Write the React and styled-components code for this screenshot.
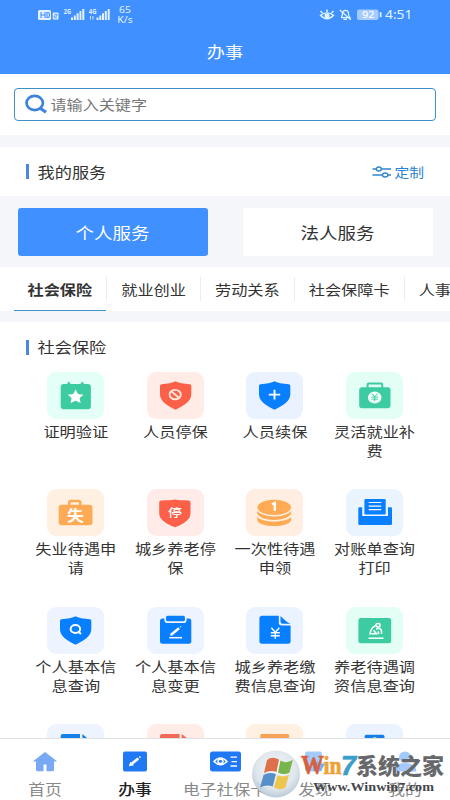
import React from 'react';
import styled, { createGlobalStyle } from 'styled-components';

const GlobalStyle = createGlobalStyle`
  * {
    box-sizing: border-box;
  }

  body {
    margin: 0;
    font-family: "Noto Sans CJK SC", "Noto Sans", sans-serif;
    color: #333;
  }
`

const Screen = styled.div`
  position: relative;
  display: flex;
  flex-direction: column;
  width: 450px;
  height: 800px;
  overflow: hidden;
  background-color: white;
`

/* the type is wider than it is tall all over the app */
const Text = styled.span`
  display: block;
  flex: none;
  font-size: ${props => props.$size || 16.2}px;
  font-weight: ${props => props.$weight || 400};
  line-height: 24px;
  color: ${props => props.$color || '#333'};
  white-space: nowrap;
  transform: scaleY(0.85);
`

const Header = styled.div`
  flex: none;
  height: 73.5px;
  background-color: #4090ff;
`

const StatusBar = styled.div`
  height: 30px;
  display: flex;
  justify-content: space-between;
  padding: 0 39px 0 37px;
`

const StatusGroup = styled.div`
  display: flex;
  align-items: center;
`

const Speed = styled.div`
  width: 28px;
  padding-top: 0;
  font-family: "Noto Sans", sans-serif;
  font-size: 9.5px;
  line-height: 10px;
  color: #e3f1ff;
  text-align: center;
  transform: scaleX(1.1);
`

const Time = styled.div`
  margin-left: 3px;
  width: 26px;
  font-family: "Noto Sans", sans-serif;
  font-size: 13px;
  line-height: 28px;
  padding-bottom: 2px;
  color: #e6f6ff;
  white-space: nowrap;
  transform: scaleX(1.06);
  transform-origin: left;
`

const TitleBar = styled.div`
  height: 42px;
  display: flex;
  justify-content: center;
  align-items: center;
`

const SearchArea = styled.div`
  flex: none;
  height: 61.5px;
  padding: 14.5px 14px 0;
`

const SearchBox = styled.div`
  height: 33px;
  display: flex;
  align-items: center;
  gap: 3px;
  padding: 0 0 1px 9.5px;
  border: 1.5px solid #3f8fc9;
  border-radius: 4px;
`

const Gap = styled.div`
  flex: none;
  height: ${props => props.$height}px;
  background-color: #f4f6f9;
`

const SectionTitle = styled.div`
  flex: none;
  height: ${props => props.$height}px;
  display: flex;
  align-items: center;
  padding: 0 26px 0 26px;
`

const Bar = styled.div`
  width: 3px;
  height: 15px;
  margin-right: 8.5px;
  background-color: #4a88e2;
`

const Customize = styled.div`
  display: flex;
  align-items: center;
  gap: 2px;
  margin-left: auto;
`

const ServiceSwitch = styled.div`
  flex: none;
  height: 71px;
  display: flex;
  gap: 35px;
  padding: 11.5px 17.5px;
  background-color: #f4f6f9;
`

const ServiceButton = styled.div`
  flex: 1;
  display: flex;
  align-items: center;
  justify-content: center;
  border-radius: 3px;
  background-color: ${props => (props.$active ? '#4090ff' : 'white')};
`

const Tabs = styled.div`
  flex: none;
  height: 44px;
  display: flex;
  padding-left: 13.5px;
  overflow: hidden;
`

const Tab = styled.div`
  flex: none;
  display: flex;
  align-items: center;
  padding: 0 14px;
  border-bottom: 1.5px solid ${props => (props.$active ? '#3e94c4' : 'transparent')};
`

const Divider = styled.div`
  flex: none;
  width: 1px;
  height: 24px;
  margin-top: 10px;
  background-color: #e9edf0;
`

const Services = styled.div`
  flex: 1;
  min-height: 0;
  display: grid;
  grid-template-columns: repeat(4, 99.6px);
  grid-auto-rows: 117.3px;
  padding-left: 26px;
  overflow: hidden;
`

const Service = styled.div`
  display: flex;
  flex-direction: column;
  align-items: center;
`

const Tile = styled.div`
  flex: none;
  width: 57px;
  height: 47px;
  border-radius: 9px;
  background-color: ${props => props.$background};

  svg {
    display: block;
  }
`

const Label = styled.div`
  width: 86px;
  margin-top: 3px;
  text-align: center;
  font-size: 16.2px;
  line-height: 22.4px;
  white-space: pre-line;
  transform: scaleY(0.85);
  transform-origin: top;
`

const NavBar = styled.div`
  flex: none;
  height: 62px;
  display: grid;
  grid-template-columns: repeat(5, 90px);
  border-top: 1.5px solid #dfe1e3;
  background-color: white;
`

const NavItem = styled.div`
  display: flex;
  flex-direction: column;
  align-items: center;
  padding-top: 11.5px;

  svg {
    flex: none;
    margin-bottom: 5px;
  }
`

const Watermark = styled.svg`
  position: absolute;
  left: 250px;
  top: 746px;
`

const GREEN = '#3dcba2'
const RED = '#fc6049'
const BLUE = '#087fff'
const ORANGE = '#ffaa55'

const Shield = ({ color }) => (
  <path fill={color} d="M28.5 9.3C26 10.8 20 12 14.5 12.2Q13 12.3 13 13.7V22C13 29 19 33 28.5 37.8C38 33 44.3 29 44.3 22V13.7Q44.3 12.3 42.8 12.2C37 12 31 10.8 28.5 9.3Z" />
)

const Yen = ({ x, y, size = 1, color = 'white' }) => (
  <path
    transform={`translate(${x} ${y}) scale(${size})`}
    d="M-4 -5.5L0 -1L4 -5.5M0 -1V5.5M-4.5 -0.5H4.5M-4.5 2.5H4.5"
    stroke={color}
    strokeWidth="1.4"
    fill="none"
  />
)

const icons = {
  star: (
    <>
      <rect x="13.7" y="12" width="30.2" height="25.3" rx="3" fill={GREEN} />
      <path d="M21.8 12V11.5M35.2 12V11.5" stroke={GREEN} strokeWidth="3" strokeLinecap="round" />
      <path fill="white" d="M28.6 17.5L31 22L36.5 22.7L32.6 26.1L33.6 31L28.6 28.7L23.6 31L24.6 26.1L20.7 22.7L26.2 22Z" />
    </>
  ),
  stop: (
    <>
      <Shield color={RED} />
      <ellipse cx="28.2" cy="22.6" rx="5.6" ry="4.7" fill="none" stroke="#ffe8da" strokeWidth="1.9" />
      <path d="M24.6 19.5L31.8 25.7" stroke="#ffe8da" strokeWidth="1.8" />
    </>
  ),
  plus: (
    <>
      <Shield color={BLUE} />
      <path d="M28.5 17.7V27.5M22.8 22.6H34.2" stroke="white" strokeWidth="1.9" />
    </>
  ),
  purse: (
    <>
      <rect x="13.2" y="15.3" width="31.3" height="21" rx="3" fill={GREEN} />
      <rect x="21.6" y="11.4" width="14.6" height="6" rx="1" fill="none" stroke={GREEN} strokeWidth="2" />
      <ellipse cx="28.7" cy="25.4" rx="6.8" ry="6" fill="#effff8" />
      <Yen x={28.7} y={25.4} size={0.7} color={GREEN} />
    </>
  ),
  jobless: (
    <>
      <rect x="11.7" y="15.8" width="33.8" height="20.4" rx="3" fill={ORANGE} />
      <path d="M22.3 17V13.5Q22.3 12 24 12H31.5Q33.3 12 33.3 13.5V17" fill="none" stroke={ORANGE} strokeWidth="2.6" />
      <text transform="translate(28.6 32.2) scale(1 0.9)" textAnchor="middle" fontFamily="'Noto Sans CJK SC', sans-serif" fontWeight="700" fontSize="17" fill="white">失</text>
    </>
  ),
  pause: (
    <>
      <path fill={RED} d="M28 10.5C32 11.3 36 11.4 41.5 11.4Q43.5 11.5 43.5 13.5V24C43.5 31 37 34.5 28 38.3C19 34.5 12.2 31 12.2 24V13.5Q12.2 11.5 14.2 11.4C20 11.4 24 11.3 28 10.5Z" />
      <text transform="translate(28 27.6) scale(1 0.85)" textAnchor="middle" fontFamily="'Noto Sans CJK SC', sans-serif" fontWeight="500" fontSize="14" fill="white">停</text>
    </>
  ),
  coins: (
    <>
      <path fill={ORANGE} d="M11.2 28C17 34 39 34 45.2 28V31C43 39 13 39 11.2 31Z" />
      <path fill={ORANGE} stroke="#fff0e2" strokeWidth="1.4" d="M10.5 21V24.5C13 34 43 34 45.8 24.5V21Z" />
      <ellipse cx="28.2" cy="18.4" rx="17.5" ry="8.4" fill={ORANGE} stroke="#fff0e2" strokeWidth="1.4" />
      <path d="M26 15.5L28.8 14V21.8" fill="none" stroke="white" strokeWidth="2.3" />
    </>
  ),
  printer: (
    <>
      <path fill={BLUE} d="M12.3 19.5Q12.3 18.3 13.6 18.3H16.2V27H42V18.3H44.8Q46 18.3 46 19.5V34.8Q46 36.1 44.6 36.1H13.7Q12.3 36.1 12.3 34.8Z" />
      <rect x="18.4" y="10" width="21.3" height="15.6" rx="1.3" fill={BLUE} />
      <path d="M22.7 13.5H35.2M22.7 17.1H35.2M22.7 20.7H35.2" stroke="white" strokeWidth="1.2" />
    </>
  ),
  query: (
    <>
      <Shield color={BLUE} />
      <ellipse cx="28.4" cy="22" rx="4.8" ry="4" fill="none" stroke="white" strokeWidth="2" />
      <path d="M31 24.5L34 27" stroke="white" strokeWidth="2" />
    </>
  ),
  edit: (
    <>
      <rect x="13" y="11.6" width="31.3" height="25.1" rx="2.5" fill={BLUE} />
      <rect x="18.2" y="7.8" width="20.6" height="7.4" rx="2.5" fill={BLUE} stroke="#edf4ff" strokeWidth="1.7" />
      <path d="M25 27L32 21.2" stroke="white" strokeWidth="2.5" />
      <path d="M23.7 28.3L24.1 26.2L26 27.7ZM32.9 20.4L34.2 19.3" fill="white" stroke="white" strokeWidth="1" />
      <path d="M22.3 30.7H35" stroke="white" strokeWidth="1.5" />
    </>
  ),
  bill: (
    <>
      <path fill={BLUE} d="M16.2 8.8H32.8V15.7Q32.8 18.4 35.8 18.4H44.6V34.2Q44.6 36.7 42 36.7H16.2Q13.4 36.7 13.4 34.2V11.3Q13.4 8.8 16.2 8.8Z" />
      <path fill={BLUE} d="M34.5 9V14.8Q34.5 16.7 36.8 16.7H44.6C41 15.5 37.5 12 34.5 9Z" />
      <Yen x={29.3} y={26.3} />
    </>
  ),
  raise: (
    <>
      <rect x="12.4" y="11" width="32.8" height="25.2" rx="2.5" fill={GREEN} />
      <g fill="none" stroke="white" strokeWidth="1.5">
        <ellipse cx="32" cy="18.3" rx="2.1" ry="1.7" />
        <path d="M29.7 18.7C26 19.5 24.7 23 24 26.7H30.5L27.5 23.3M30 22L33.5 21.3Q36 22.5 35.5 26.8M31.7 24.5L33.2 26.8" />
        <path d="M22.5 31.2H37.5" />
      </g>
    </>
  ),
  docBlue: (
    <>
      <path fill="#147fe8" d="M16 10H33V30H13.7V12Q13.7 10 16 10Z" />
      <path fill="#147fe8" d="M35.4 10L43 16.5H35.4Z" />
    </>
  ),
  docRed: (
    <>
      <path fill="#f06a57" d="M15.3 10H32.5V30H13V12Q13 10 15.3 10Z" />
      <path fill="#f06a57" d="M34.7 10L43 16.5H34.7Z" />
    </>
  ),
  box: <rect x="14.3" y="10" width="28.8" height="25" rx="1.5" fill="#f6a257" />,
  badge: (
    <>
      <rect x="18.7" y="10.7" width="19.7" height="25" rx="1.5" fill="#147fe8" />
      <circle cx="28.7" cy="15.8" r="2.6" fill="white" />
    </>
  ),
}

const services = [
  { icon: 'star', label: '证明验证', background: '#e3fff7' },
  { icon: 'stop', label: '人员停保', background: '#ffece6' },
  { icon: 'plus', label: '人员续保', background: '#eaf2ff' },
  { icon: 'purse', label: '灵活就业补\n费', background: '#e3fff5' },
  { icon: 'jobless', label: '失业待遇申\n请', background: '#fff0e2' },
  { icon: 'pause', label: '城乡养老停\n保', background: '#ffece8' },
  { icon: 'coins', label: '一次性待遇\n申领', background: '#ffeee1' },
  { icon: 'printer', label: '对账单查询\n打印', background: '#eaf4ff' },
  { icon: 'query', label: '个人基本信\n息查询', background: '#edf4ff' },
  { icon: 'edit', label: '个人基本信\n息变更', background: '#edf4ff' },
  { icon: 'bill', label: '城乡养老缴\n费信息查询', background: '#eaf3ff' },
  { icon: 'raise', label: '养老待遇调\n资信息查询', background: '#e3fff5' },
  { icon: 'docBlue', background: '#eef4ff' },
  { icon: 'docRed', background: '#ffece6' },
  { icon: 'box', background: '#fff0e2' },
  { icon: 'badge', background: '#eaf3ff' },
]

const tabs = ['社会保险', '就业创业', '劳动关系', '社会保障卡', '人事']

const SignalIcons = () => (
  <svg width="74" height="30" viewBox="37 0 74 30" fill="#e3f1ff">
    <rect x="38" y="10" width="13" height="10" rx="1.5" />
    <path d="M41 12V18M45 12V18M41 15H45M47 12.5H48Q49.5 12.5 49.5 15T48 17.5H47Z" fill="none" stroke="#4090ff" strokeWidth="1.1" />
    <rect x="52.7" y="12.5" width="5.8" height="7" rx="1" />
    <path d="M54.2 14.2H57V16H54.2V17.8H57" fill="none" stroke="#4090ff" strokeWidth="0.8" />
    <text x="63.8" y="14" fontFamily="'Noto Sans', sans-serif" fontWeight="700" fontSize="6.5" textLength="7.2" lengthAdjust="spacingAndGlyphs">2G</text>
    <text x="88.8" y="14" fontFamily="'Noto Sans', sans-serif" fontWeight="700" fontSize="6.5" textLength="7.7" lengthAdjust="spacingAndGlyphs">4G</text>
    <path d="M71 17.5H73V20H71ZM73.8 15.5H75.8V20H73.8ZM76.6 13.3H78.6V20H76.6ZM79.5 11H81.4V20H79.5ZM82.3 9H84.3V20H82.3Z" />
    <path d="M96.5 17.5H98.5V20H96.5ZM99.3 15.5H101.3V20H99.3ZM102 13.3H104V20H102ZM104.8 11H106.8V20H104.8ZM107.7 9H109.7V20H107.7Z" />
    <path d="M90.5 16V19.5M93 16V19.5" stroke="#cde5ff" strokeWidth="1" />
  </svg>
)

const StateIcons = () => (
  <svg width="64" height="30" viewBox="317 0 64 30" fill="none" stroke="#e0f7ff" strokeWidth="1.4">
    <path d="M319.5 15.3Q326 10.5 332.5 15.3Q326 22.3 319.5 15.3ZM319.5 11L321.5 13M326 9.5V12M332.5 11L330.5 13" />
    <circle cx="326" cy="15.7" r="1.8" fill="#e0f7ff" />
    <path d="M340.3 17.5Q341.5 16 341.5 13Q341.8 10.5 344.3 10.3Q347.5 10.5 347.5 13.5Q347.5 16 349 17.7H340M342.5 19.3H346M338.8 10L349.8 19.7" strokeWidth="1.2" />
    <rect x="356" y="9.5" width="21.5" height="10.5" rx="2" fill="#a6ccff" stroke="none" />
    <rect x="378.7" y="12.2" width="1.8" height="5" fill="#e0f7ff" stroke="none" />
    <text x="361" y="18.3" fontFamily="'Noto Sans', sans-serif" fontWeight="500" fontSize="9.5" fill="white" stroke="none" textLength="12.5" lengthAdjust="spacingAndGlyphs">92</text>
  </svg>
)

const SearchIcon = () => (
  <svg width="23" height="20" viewBox="0 0 23 20" fill="none" stroke="#3d82dc" strokeWidth="2.7">
    <ellipse cx="9.7" cy="9" rx="8.2" ry="7.2" />
    <path d="M14.5 13.8L21 18.3" strokeWidth="3.2" />
  </svg>
)

const SlidersIcon = () => (
  <svg width="20" height="12" viewBox="0 0 20 12" fill="none" stroke="#3185cd" strokeWidth="1.4">
    <path d="M0.5 3H4.5M9 3H19M0.5 9H10.5M16 9H19" />
    <ellipse cx="6.8" cy="3" rx="2.5" ry="2" />
    <ellipse cx="13.2" cy="9" rx="2.7" ry="2" />
  </svg>
)

const HomeIcon = () => (
  <svg width="26" height="21" viewBox="0 0 26 21">
    <path fill="#77a9f4" d="M13 1L25.3 10.5H22V18.7Q22 20.2 20 20.2H14.5V13.5H11.5V20.2H6Q4 20.2 4 18.7V10.5H0.7Z" />
  </svg>
)

const WorkIcon = () => (
  <svg width="24" height="21" viewBox="0 0 24 21">
    <rect y="0.5" width="24" height="20" rx="2" fill="#2178f5" />
    <path d="M8.7 12.8L15.3 7.5" stroke="white" strokeWidth="2.7" />
    <path d="M7 14.3L7.6 12.3L9.4 13.8ZM16.3 6.7L17.5 5.7" fill="white" stroke="white" strokeWidth="1.5" />
  </svg>
)

const CardIcon = () => (
  <svg width="31" height="21" viewBox="0 0 31 21" fill="none" stroke="white" strokeWidth="1.5">
    <rect y="0.5" width="31" height="20" rx="2.5" fill="#2178f5" stroke="none" />
    <path d="M4 10.5Q10.5 3.5 17 10.5Q10.5 17 4 10.5Z" />
    <ellipse cx="10.5" cy="10.4" rx="2.5" ry="2.2" />
    <path d="M20.5 6.2H27M21.5 10.7H27M20.5 15H27" strokeWidth="1.3" />
  </svg>
)

const FindIcon = () => (
  <svg width="24" height="21" viewBox="0 0 24 21">
    <rect x="2" y="0.5" width="17" height="20" rx="2" fill="#a4cbfa" />
    <path d="M11 10L22 13L18 20H10Z" fill="#78b3ee" />
  </svg>
)

const MineIcon = () => (
  <svg width="26" height="21" viewBox="0 0 26 21" fill="#a4c9fa">
    <ellipse cx="13" cy="6" rx="6" ry="5.5" />
    <path d="M1.5 20.5Q2 12 13 12T24.5 20.5Z" />
  </svg>
)

const SiteWatermark = () => (
  <Watermark width="200" height="54" viewBox="250 746 200 54">
    <defs>
      <radialGradient id="orb" cx="50%" cy="40%" r="60%">
        <stop offset="0" stopColor="#f5f8fb" />
        <stop offset="0.7" stopColor="#dce3ea" />
        <stop offset="1" stopColor="#b6c6d6" />
      </radialGradient>
    </defs>
    <ellipse cx="276" cy="774" rx="24" ry="23.5" fill="url(#orb)" opacity="0.93" />
    <path fill="#df704c" d="M267 760Q272 756 279 759.5L276.5 772Q270 769.5 264 773Z" />
    <path fill="#78b64c" d="M280.5 760.5Q286 764 292.8 760L289.5 772.5Q284 775.5 278 772.5Z" />
    <path fill="#568fc8" d="M263.5 775Q269 771.5 276 774L272.7 786.5Q267 784 260 787.5Z" />
    <path fill="#edc64e" d="M277.5 775Q283 778 289 774.8L285.5 787.5Q280 791 274 787.5Z" />
    <g fontFamily="'Liberation Sans', sans-serif" fontWeight="700" strokeWidth="0.7">
      <text x="301" y="774" fontFamily="'Liberation Serif', serif" fontSize="28" fill="#d9603f" stroke="#d9603f" textLength="23" lengthAdjust="spacingAndGlyphs">W</text>
      <text x="323.5" y="774" fontFamily="'Liberation Serif', serif" fontSize="25" fill="#efa234" stroke="#efa234" textLength="18" lengthAdjust="spacingAndGlyphs">in</text>
      <text x="341" y="774.5" fontSize="27" fontStyle="italic" fill="#3b9fca" stroke="#3b9fca" textLength="15" lengthAdjust="spacingAndGlyphs">7</text>
      <text x="356" y="773.5" fontFamily="'Noto Sans CJK SC', sans-serif" fontWeight="900" fontSize="22" fill="#66686b" textLength="88" lengthAdjust="spacingAndGlyphs">系统之家</text>
    </g>
    <text x="313" y="791" fontFamily="'Liberation Serif', serif" fontWeight="700" fontSize="13.5" fill="#44464a" textLength="121" lengthAdjust="spacingAndGlyphs">Www.Winwin7.com</text>
  </Watermark>
)

const navItems = [
  { label: '首页', Icon: HomeIcon },
  { label: '办事', Icon: WorkIcon, active: true },
  { label: '电子社保卡', Icon: CardIcon },
  { label: '发现', Icon: FindIcon },
  { label: '我的', Icon: MineIcon },
]

const App = () => {
  return (
    <>
      <GlobalStyle />
      <Screen>
        <Header>
          <StatusBar>
            <StatusGroup>
              <SignalIcons />
              <Speed>65<br />K/s</Speed>
            </StatusGroup>
            <StatusGroup>
              <StateIcons />
              <Time>4:51</Time>
            </StatusGroup>
          </StatusBar>
          <TitleBar>
            <Text $size={18.2} $color="white">办事</Text>
          </TitleBar>
        </Header>
        <SearchArea>
          <SearchBox>
            <SearchIcon />
            <Text $size={16.1} $color="#777">请输入关键字</Text>
          </SearchBox>
        </SearchArea>
        <Gap $height={12} />
        <SectionTitle $height={49}>
          <Bar />
          <Text $size={17.2}>我的服务</Text>
          <Customize>
            <SlidersIcon />
            <Text $size={14.8} $color="#2884d2">定制</Text>
          </Customize>
        </SectionTitle>
        <ServiceSwitch>
          <ServiceButton $active>
            <Text $size={18.5} $color="white">个人服务</Text>
          </ServiceButton>
          <ServiceButton>
            <Text $size={18.5}>法人服务</Text>
          </ServiceButton>
        </ServiceSwitch>
        <Tabs>
          {tabs.map((tab, i) => (
            <React.Fragment key={tab}>
              {i > 0 && <Divider />}
              <Tab $active={i === 0}>
                <Text $weight={i === 0 ? 700 : 400}>{tab}</Text>
              </Tab>
            </React.Fragment>
          ))}
        </Tabs>
        <Gap $height={11} />
        <SectionTitle $height={50}>
          <Bar />
          <Text $size={17.2}>社会保险</Text>
        </SectionTitle>
        <Services>
          {services.map(({ icon, label, background }) => (
            <Service key={icon}>
              <Tile $background={background}>
                <svg width="57" height="47" viewBox="0 0 57 47">{icons[icon]}</svg>
              </Tile>
              {label && <Label>{label}</Label>}
            </Service>
          ))}
        </Services>
        <NavBar>
          {navItems.map(({ label, Icon, active }) => (
            <NavItem key={label}>
              <Icon />
              <Text $size={16.8} $weight={active ? 500 : 400} $color={active ? '#222' : '#888'}>{label}</Text>
            </NavItem>
          ))}
        </NavBar>
        <SiteWatermark />
      </Screen>
    </>
  );
};

export default App;
